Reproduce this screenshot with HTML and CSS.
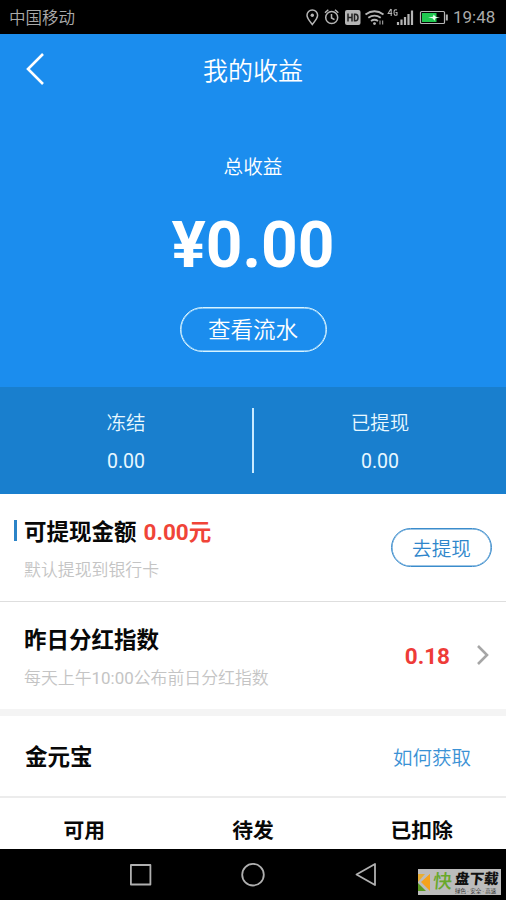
FILE: index.html
```html
<!DOCTYPE html>
<html lang="zh-CN">
<head>
<meta charset="utf-8">
<title>我的收益</title>
<link rel="stylesheet" href="styles.css">
</head>
<body>
<div class="status">
  <span class="carrier">中国移动</span>
  <svg class="status-icons" width="146" height="24" viewBox="0 0 146 24" fill="none" stroke="#b5b5b5" stroke-width="1.5">
    <path d="M10.300 19.500C7.500 16 5 13.200 5 10.300a5.300 5.300 0 0 1 10.600 0c0 2.900-2.500 5.700-5.300 9.200z"/><circle cx="10.300" cy="10.300" r="1.700" fill="#b5b5b5" stroke="none"/>
    <circle cx="29.700" cy="12.500" r="6"/><path d="M29.500 9v4l3 1.700M23 7.700l3.300-2.900M36.300 7.700L33 4.800"/>
    <rect x="43" y="5" width="15.500" height="15" rx="2" fill="#b5b5b5" stroke="none"/><path d="M46 8.500v8M50 8.500v8M46 12.500h4M52.500 9.200h1q2.500 0 2.500 3.300t-2.500 3.300h-1z" stroke="#222"/>
    <path d="M63.500 9.500q9-6.500 18 0M66.300 12.800q6.200-4.500 12.400 0M69 16q3.500-2.500 7 0" stroke-width="1.800"/><circle cx="72.500" cy="18.600" r="1.400" fill="#b5b5b5" stroke="none"/><path d="M78 15.500v4M80.700 15.500v4" stroke-width="1"/>
    <path d="M88.800 4l-2.600 4.500h4M89.200 4v7M95 5q-3-1.200-3 2.500t3 2.500v-2.500h-1.500" stroke-width="1.100"/>
    <path d="M96 17v3M99.500 14.500V20M103 12v8M106.500 9v11M110 5.500V20" stroke-width="2.200"/>
    <rect x="118.500" y="6.500" width="24" height="12" rx="1" stroke-width="1.200"/><rect x="120" y="8" width="14.500" height="9" fill="#20c850" stroke="none"/><path d="M144.800 9.500v6" stroke-width="2"/><path d="M126 12.500l5-.7.500-2.300 2.500 2.500 4 .5-4.500.8-1 2.500-2-2.500z" fill="#e8fff0" stroke="none"/>
  </svg>
  <span class="time">19:48</span>
</div>
<header class="hero">
  <div class="titlebar">
    <svg class="back" width="22" height="36" viewBox="0 0 22 36"><path d="M19 3L4 18l15 15" fill="none" stroke="#fff" stroke-width="2.600"/></svg>
    <h1>我的收益</h1>
  </div>
  <div class="total-label">总收益</div>
  <div class="total">¥0.00</div>
  <div class="flow-button">查看流水</div>
</header>
<section class="stats">
  <div class="stat"><span>冻结</span><b>0.00</b></div>
  <div class="divider"></div>
  <div class="stat"><span>已提现</span><b>0.00</b></div>
</section>
<section class="row withdraw">
  <div class="info">
    <h2 class="marked">可提现金额 <em>0.00元</em></h2>
    <p>默认提现到银行卡</p>
  </div>
  <div class="withdraw-button">去提现</div>
</section>
<section class="row dividend">
  <div class="info">
    <h2>昨日分红指数</h2>
    <p>每天上午<span class="clock">10:00</span>公布前日分红指数</p>
  </div>
  <div class="index">0.18</div>
  <svg class="next" width="14" height="22" viewBox="0 0 14 22"><path d="M2 2l9 9-9 9" fill="none" stroke="#a6a6a6" stroke-width="2.600"/></svg>
</section>
<section class="row ingot"><h2>金元宝</h2><span class="link">如何获取</span></section>
<section class="columns"><span>可用</span><span>待发</span><span>已扣除</span></section>
<nav class="navbar">
  <svg class="nav-icons" width="250" height="26" viewBox="0 0 250 26" fill="none" stroke="#b0b0b0" stroke-width="1.800" stroke-linejoin="round"><rect x="2.900" y="3" width="19.500" height="19.500"/><circle cx="125" cy="12.700" r="10.800"/><path d="M247 2v21l-18.500-10.500z"/></svg>
  <div class="watermark">
    <svg width="12" height="26" viewBox="0 0 12 26"><path d="M0 5h7L0 13z" fill="#e8ad33"/><path d="M7 5h5v16L4 13l8-8z" fill="#f6a21b"/><path d="M12 5v17L3 13z" fill="#f6a21b"/><path d="M0 14l8 8H0z" fill="#5c9b20"/></svg>
    <span class="mark-first">快</span>
    <div class="mark-text"><strong>盘下载</strong><small>绿色 · 安全 · 高速</small></div>
  </div>
</nav>
</body>
</html>
```

FILE: styles.css
```css
* { box-sizing: border-box; }
body {
  margin: 0;
  width: 506px;
  height: 900px;
  overflow: hidden;
  background: #fff;
  color: #080808;
  font-family: Roboto, "Noto Sans CJK SC", sans-serif;
}
h1, h2, p { margin: 0; }
.status {
  height: 34px;
  background: #000;
  color: #aaa;
  display: flex;
  align-items: center;
  padding: 0 10px 0 9px;
  font-size: 16.500px;
}
.carrier { flex: 1; font-weight: 350; }
.status-icons { margin-right: 5px; }
.time { width: 43px; font-size: 17px; white-space: nowrap; }
.hero {
  height: 353px;
  background: #1b8dee;
  color: #fff;
  display: flex;
  flex-direction: column;
  align-items: center;
}
.titlebar {
  width: 100%;
  height: 72px;
  display: grid;
  grid-template-columns: 60px 1fr 60px;
  align-items: center;
  text-align: center;
}
.back { margin-left: 24px; margin-top: -2px; }
h1 { padding-top: 3px; font-size: 25px; line-height: 36px; font-weight: 350; }
.total-label { margin-top: 48px; font-size: 19.600px; line-height: 28px; font-weight: 350; }
.total { margin-top: 26px; font-size: 64px; line-height: 76px; font-weight: 700; }
.flow-button {
  margin-top: 23px;
  width: 147px;
  height: 45px;
  border: 1.500px solid #d8f4ff;
  border-radius: 23px;
  box-shadow: inset 0 0 0 .5px #d8f4ff;
  font-size: 22.500px;
  line-height: 45px;
  text-align: center;
  font-weight: 350;
}
.stats {
  height: 107px;
  padding-top: 5px;
  background: #197fce;
  color: #e8f8ff;
  display: flex;
  align-items: center;
}
.stat { flex: 1; display: flex; flex-direction: column; align-items: center; gap: 10px; font-size: 19.500px; line-height: 28px; font-weight: 350; }
.stat b { font-weight: 400; }
.divider { width: 2px; height: 65px; margin-top: -5px; background: #c8eaff; }
.row { display: flex; align-items: center; }
.info { flex: 1; padding-top: 2px; }
h2 { font-size: 22.500px; line-height: 32px; font-weight: 700; }
.withdraw { height: 108px; padding: 0 14px 0 24px; border-bottom: 1px solid #dedede; }
.marked { display: flex; align-items: center; }
.marked::before { content: ""; width: 3px; height: 21px; margin: -3px 7px 0 -10px; background: #2b84c8; }
h2 em { margin-left: 7px; font-style: normal; color: #f04438; }
.info p { margin-top: 10px; font-size: 16.900px; line-height: 24px; font-weight: 350; color: #c4c4c4; }
.clock { font-weight: 400; }
.withdraw-button {
  width: 101px;
  height: 39px;
  border: 1.500px solid #3b8ccc;
  border-radius: 20px;
  box-shadow: inset 0 0 0 .5px #3b8ccc;
  color: #2f86cb;
  font-size: 19.600px;
  line-height: 41px;
  text-align: center;
  font-weight: 350;
}
.dividend { height: 107px; padding: 0 16px 0 24px; }
.index { margin-right: 1px; font-size: 22.500px; font-weight: 700; color: #ee3b38; }
.next { margin: -2px 0 0 25px; }
.ingot { height: 89px; padding: 0 35px 0 25px; border-top: 7px solid #f4f4f4; border-bottom: 2px solid #ececec; justify-content: space-between; }
.ingot h2 { padding-top: 2px; }
.link { color: #3b92d5; font-size: 19.500px; font-weight: 350; }
.columns { height: 51px; padding-top: 18px; display: grid; grid-template-columns: repeat(3, 1fr); text-align: center; font-size: 20.800px; line-height: 30px; font-weight: 700; }
.navbar { height: 51px; background: #000; display: flex; padding-left: 128px; }
.nav-icons { margin-top: 13px; }
.watermark { margin: 20px 0 0 40px; width: 83px; height: 26px; background: #bcbcbc; display: flex; align-items: center; overflow: hidden; }
.mark-first { margin-left: 3px; width: 19px; font-size: 19px; line-height: 26px; font-weight: 500; color: #69a82b; transform: skewX(-5deg); }
.mark-text { margin-left: 3px; padding-top: 2px; display: flex; flex-direction: column; white-space: nowrap; }
.mark-text strong { font-size: 14.500px; line-height: 16px; font-weight: 900; color: #111; transform: skewX(-6deg); }
.mark-text small { font-size: 5.500px; line-height: 7px; color: #333; }
```
